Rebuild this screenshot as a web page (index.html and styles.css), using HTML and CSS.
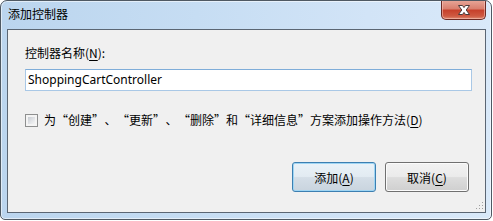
FILE: index.html
```html
<!DOCTYPE html>
<html lang="zh-CN">
<head>
<meta charset="utf-8">
<title>添加控制器</title>
<link rel="stylesheet" href="styles.css">
</head>
<body>
<div class="window">
  <div class="titlebar">
    <span class="title">添加控制器</span>
    <div class="close-btn">
      <svg width="18" height="12" viewBox="0 0 18 12">
        <path d="M3.5 1.5 H7.5 L9 3.6 L10.5 1.5 H14.5 L11.2 6 L14.5 10.5 H10.5 L9 8.4 L7.5 10.5 H3.5 L6.8 6 Z" fill="#ffffff" stroke="#4a3a38" stroke-width="1" stroke-linejoin="round"/>
      </svg>
    </div>
  </div>
  <div class="client">
    <div class="field-label">控制器名称(<u>N</u>):</div>
    <div class="textbox">ShoppingCartController</div>
    <div class="check-row">
      <span class="checkbox"><span class="checkbox-inner"></span></span>
      <span class="check-label">为<span class="oq">“</span>创建<span class="cq">”</span><span class="fw">、</span><span class="oq">“</span>更新<span class="cq">”</span><span class="fw">、</span><span class="oq">“</span>删除<span class="cq">”</span>和<span class="oq">“</span>详细信息<span class="cq">”</span>方案添加操作方法(<u>D</u>)</span>
    </div>
    <div class="buttons">
      <div class="btn btn-default">添加(<u>A</u>)</div>
      <div class="btn">取消(<u>C</u>)</div>
    </div>
    <svg class="grip" width="8" height="8" viewBox="0 0 8 8">
      <rect x="6" y="0" width="1" height="1" fill="#a0a0a0"/>
      <rect x="3" y="3" width="1" height="1" fill="#a0a0a0"/>
      <rect x="6" y="3" width="1" height="1" fill="#a0a0a0"/>
      <rect x="0" y="6" width="1" height="1" fill="#a0a0a0"/>
      <rect x="3" y="6" width="1" height="1" fill="#a0a0a0"/>
      <rect x="6" y="6" width="1" height="1" fill="#a0a0a0"/>
    </svg>
  </div>
</div>
</body>
</html>
```

FILE: styles.css
```css
html, body {
  margin: 0;
  padding: 0;
  background: #ffffff;
}

body {
  width: 493px;
  height: 221px;
  overflow: hidden;
  font-family: "Noto Sans", "Noto Sans CJK SC", sans-serif;
  font-size: 12px;
  color: #000;
}

.window {
  position: relative;
  box-sizing: border-box;
  width: 492px;
  height: 220px;
  border: 1px solid #4f5963;
  border-radius: 7px 7px 5px 5px;
  background: linear-gradient(90deg, #bbd5ee 0%, #c6ddf3 40%, #d2e4f7 75%, #d9e9f9 100%);
  box-shadow: inset 0 0 0 1px rgba(255,255,255,0.55);
  padding: 0 5px 6px 6px;
  display: flex;
  flex-direction: column;
  overflow: hidden;
}

.titlebar {
  position: relative;
  height: 28px;
  display: flex;
  align-items: flex-start;
}

.title {
  font-family: "Noto Sans CJK SC", sans-serif;
  font-size: 12px;
  line-height: 16px;
  margin-top: 5px;
  margin-left: 1px;
  color: #000;
}

.close-btn {
  margin-left: auto;
  margin-top: -1px;
  width: 43px;
  height: 19px;
  border: 1px solid #6b2a24;
  border-top: none;
  border-radius: 0 0 5px 5px;
  background: linear-gradient(180deg, #e8a89a 0%, #d9806f 45%, #c7412c 55%, #cf5a42 85%, #dd8a73 100%);
  box-shadow: inset 0 0 0 1px rgba(255,210,200,0.5);
  display: flex;
  align-items: center;
  justify-content: center;
}

.client {
  position: relative;
  flex: 1;
  border: 1px solid #5b6673;
  background: #f0f0f0;
  padding: 15px 13px 0 17px;
  display: flex;
  flex-direction: column;
}

.field-label {
  line-height: 16px;
  font-family: "Noto Sans CJK SC", sans-serif;
}

.field-label u, .check-label u, .btn u {
  text-decoration: underline;
  text-underline-offset: 2px;
}

.textbox {
  margin-top: 8px;
  box-sizing: border-box;
  height: 22px;
  border: 1px solid #a9c8e6;
  border-top-color: #7fadd9;
  background: #ffffff;
  padding-left: 2px;
  line-height: 20px;
  font-family: "Noto Sans", sans-serif;
  font-size: 12px;
}

.check-row {
  margin-top: 21px;
  display: flex;
  align-items: center;
  height: 16px;
}

.checkbox {
  box-sizing: border-box;
  width: 13px;
  height: 13px;
  border: 1px solid #8e8f8f;
  background: #f4f4f4;
  padding: 2px;
  display: inline-block;
}

.checkbox-inner {
  display: block;
  width: 7px;
  height: 7px;
  background: linear-gradient(135deg, #c8ccd2 0%, #e4e6e9 60%, #f4f4f4 100%);
}

.check-label {
  margin-left: 6px;
  line-height: 16px;
  font-family: "Noto Sans CJK SC", sans-serif;
  white-space: nowrap;
}

.oq, .cq, .fw {
  display: inline-block;
  width: 12px;
}

.oq {
  text-align: right;
}

.cq, .fw {
  text-align: left;
}

.fw {
  width: 13px;
  text-align: center;
}

.buttons {
  margin-top: 34px;
  display: flex;
  justify-content: flex-end;
  gap: 9px;
  padding-right: 3px;
}

.btn {
  box-sizing: border-box;
  width: 84px;
  height: 30px;
  border: 1px solid #707070;
  border-radius: 3px;
  background: linear-gradient(180deg, #f2f2f2 0%, #ebebeb 48%, #dddddd 52%, #cfcfcf 100%);
  box-shadow: inset 0 0 0 1px #fbfbfb;
  display: flex;
  align-items: center;
  justify-content: center;
  font-family: "Noto Sans CJK SC", sans-serif;
  font-size: 12px;
  color: #000;
}

.btn-default {
  border-color: #3c7fb1;
  box-shadow: inset 0 0 0 1px #9fd5f3;
  background: linear-gradient(180deg, #eaf2f8 0%, #e2ebf2 48%, #d4dee7 52%, #c9d4de 100%);
}

.grip {
  position: absolute;
  right: 1px;
  bottom: 2px;
}
```
